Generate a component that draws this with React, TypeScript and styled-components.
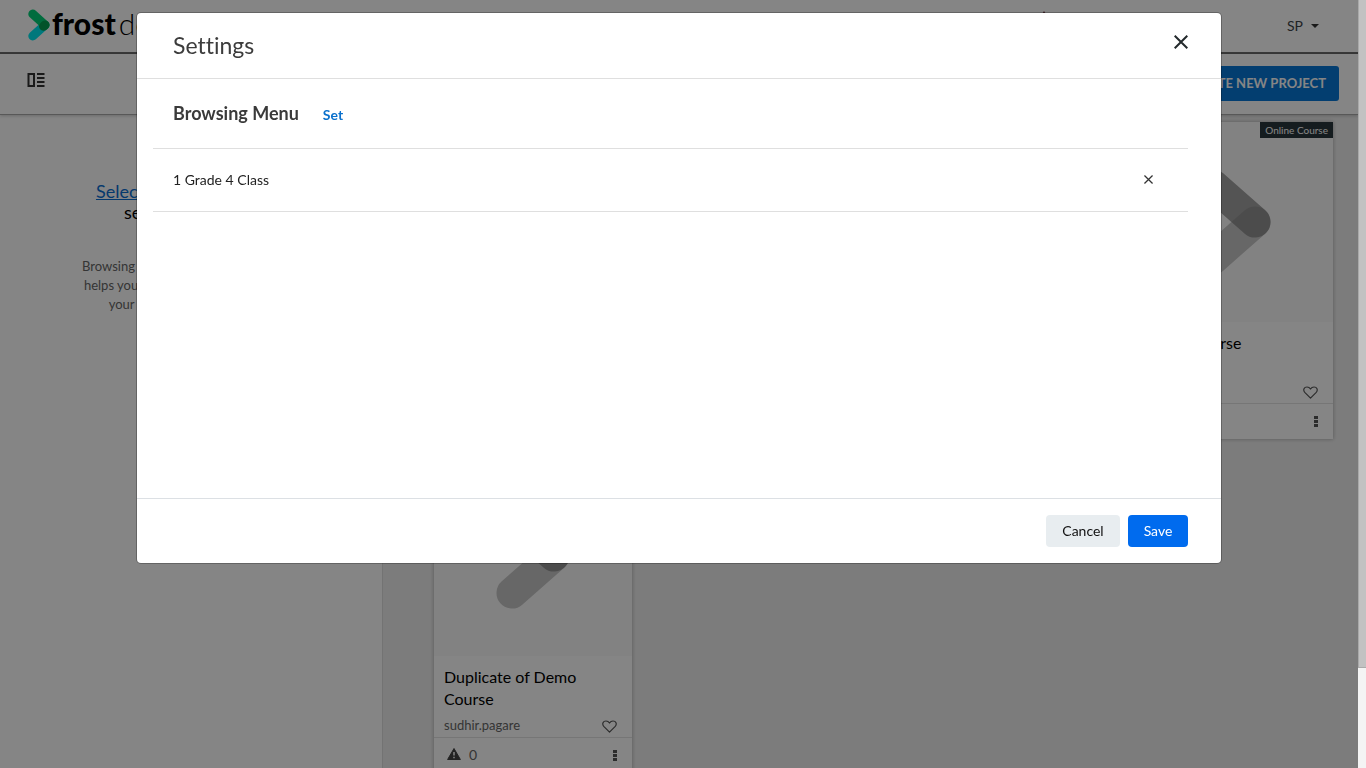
import React from 'react';
import styled, { createGlobalStyle } from 'styled-components';

const GlobalStyle = createGlobalStyle`
  *, *::before, *::after { box-sizing: border-box; }
  body {
    margin: 0;
    font-family: Lato, "Liberation Sans", sans-serif;
    font-size: 14px;
    font-variant-ligatures: none;
    color: #333;
    background: #eee;
  }
  button { font-family: inherit; cursor: pointer; }
`;

const Shell = styled.div`
  display: flex;
  height: 100vh;
  overflow: hidden;
`;

const Page = styled.div`
  flex: 1;
  min-width: 0;
  display: flex;
  flex-direction: column;
`;

const TopBar = styled.header`
  flex: none;
  display: flex;
  align-items: center;
  justify-content: space-between;
  height: 54px;
  padding: 0 35px 2px 28px;
  background: #fff;
  border-bottom: 2px solid #6c6c6c;
`;

const Brand = styled.a`
  display: flex;
  align-items: center;
  gap: 2px;
  height: 48px;
  color: #000;
  text-decoration: none;
  font-size: 30px;
  line-height: 44px;
`;

const BrandText = styled.span`
  display: flex;
  gap: 3px;
  padding-bottom: 4px;
`;

const BrandName = styled.span`
  font-weight: 900;
`;

const BrandSuffix = styled.span`
  font-weight: 300;
`;

const UserArea = styled.div`
  display: flex;
  align-items: center;
  gap: 231px;
`;

const UserButton = styled.button`
  display: flex;
  align-items: center;
  gap: 8px;
  padding: 0 4px;
  border: 0;
  background: none;
  color: #3c4347;
  font-size: 14px;
  svg { margin-top: 2px; }
`;

const Toolbar = styled.div`
  position: relative;
  z-index: 1;
  flex: none;
  display: flex;
  align-items: flex-start;
  justify-content: space-between;
  height: 61px;
  padding: 12px 19px 0 27px;
  background: #fff;
  border-bottom: 1px solid #aaa;
  box-shadow: 0 1px 3px rgba(0, 0, 0, 0.2);
`;

const PanelToggle = styled.button`
  display: flex;
  padding: 7px 0;
  border: 0;
  background: none;
`;

const CreateButton = styled.button`
  height: 35px;
  padding: 0 13px 2px;
  border: 0;
  border-radius: 3px;
  background: #0677d6;
  color: #fff;
  font-size: 13px;
  font-weight: 700;
`;

const Columns = styled.div`
  flex: 1;
  min-height: 0;
  display: flex;
`;

const Sidebar = styled.aside`
  flex: none;
  width: 383px;
  padding-top: 66px;
  background: #fff;
  border-right: 1px solid #ddd;
  text-align: center;
`;

const Prompt = styled.p`
  margin: 0;
  font-size: 18px;
  line-height: 21px;
  color: #000;
  a { color: #0a6ed1; }
`;

const Hint = styled.p`
  margin: 34px 0 0;
  font-size: 13px;
  line-height: 19px;
  color: #666;
`;

const CardGrid = styled.main`
  flex: 1;
  min-width: 0;
  display: grid;
  grid-template-columns: repeat(4, 198px);
  grid-auto-rows: 317px;
  justify-content: space-between;
  row-gap: 17px;
  padding: 7px 25px 0 51px;
  overflow: hidden;
`;

const Card = styled.article`
  position: relative;
  display: flex;
  flex-direction: column;
  background: #fff;
  box-shadow: 0 0 4px rgba(0, 0, 0, 0.3);
`;

const Cover = styled.div`
  display: flex;
  align-items: center;
  justify-content: center;
  height: 200px;
  background: #fafafa;
`;

const Tag = styled.span`
  position: absolute;
  top: 0;
  right: 0;
  height: 16px;
  padding: 0 5px;
  background: #29363c;
  color: #fff;
  font-size: 10px;
  line-height: 16px;
`;

const CardTitle = styled.h3`
  height: 54px;
  margin: 0;
  padding: 10px 10px 0;
  color: #000;
  font-size: 16px;
  font-weight: 400;
  line-height: 22px;
`;

const CardLine = styled.div<{ $foot?: boolean }>`
  display: flex;
  align-items: center;
  justify-content: space-between;
  height: ${(p) => (p.$foot ? '36px' : '27px')};
  padding: ${(p) => (p.$foot ? '0 15px 0 13px' : '5px 15px 0 10px')};
  border-top: ${(p) => (p.$foot ? '1px solid #e2e2e2' : '0')};
  color: #666;
  font-size: ${(p) => (p.$foot ? '14px' : '13px')};
`;

const LineText = styled.span`
  display: flex;
  align-items: center;
  gap: 8px;
  padding-bottom: 3px;
`;

const IconButton = styled.button`
  display: flex;
  padding: 0;
  border: 0;
  background: none;
  color: #333;
`;

const ScrollTrack = styled.div`
  flex: none;
  position: relative;
  z-index: 3;
  width: 8px;
  background: #f4f4f4;
`;

const ScrollThumb = styled.div`
  height: 87%;
  background: #c2c2c2;
  border-left: 1px solid #a9a9a9;
  border-bottom: 1px solid #aaa;
`;

const Backdrop = styled.div`
  position: fixed;
  inset: 0 8px 0 0;
  z-index: 2;
  display: flex;
  align-items: flex-start;
  justify-content: center;
  padding: 13px 16px 0;
  background: rgba(0, 0, 0, 0.48);
`;

const Dialog = styled.section`
  display: flex;
  flex-direction: column;
  width: 100%;
  max-width: 1084px;
  border-radius: 4px;
  background: #fff;
  box-shadow: 0 0 0 1px rgba(0, 0, 0, 0.25);
`;

const DialogHeader = styled.header`
  display: flex;
  align-items: center;
  justify-content: space-between;
  height: 66px;
  padding: 0 33px 0 36px;
  border-bottom: 1px solid #dfdfdf;
  h2 {
    margin: 0;
    padding-bottom: 2px;
    font-size: 23px;
    font-weight: 400;
    line-height: 28px;
    color: #3c3c3c;
  }
`;

const CloseButton = styled(IconButton)`
  padding-bottom: 8px;
  color: #23292c;
`;

const DialogBody = styled.div`
  min-height: 419px;
  padding: 0 33px 0 16px;
`;

const SectionHead = styled.div`
  display: flex;
  align-items: center;
  gap: 24px;
  height: 70px;
  padding: 0 20px 2px;
  border-bottom: 1px solid #dfdfdf;
  h3 {
    margin: 0;
    font-size: 18px;
    font-weight: 700;
    line-height: 22px;
    color: #3a3a3a;
  }
`;

const SetButton = styled.button`
  padding: 3px 0 0;
  border: 0;
  background: none;
  color: #0a70cc;
  font-size: 14px;
  font-weight: 700;
`;

const MenuRow = styled.div`
  display: flex;
  align-items: center;
  justify-content: space-between;
  height: 63px;
  padding: 0 35px 2px 20px;
  border-bottom: 1px solid #dfdfdf;
  color: #222;
`;

const DialogFooter = styled.footer`
  display: flex;
  align-items: center;
  justify-content: flex-end;
  gap: 8px;
  height: 65px;
  padding: 0 33px;
  border-top: 1px solid #dce0e4;
`;

const Action = styled.button<{ $primary?: boolean }>`
  height: 32px;
  width: ${(p) => (p.$primary ? '60px' : '74px')};
  padding: 0 0 2px;
  border: 0;
  border-radius: 4px;
  background: ${(p) => (p.$primary ? '#006bee' : '#e8edf0')};
  color: ${(p) => (p.$primary ? '#fff' : '#111')};
  font-size: 14px;
`;

const LogoMark = () => (
  <svg width="22" height="32" viewBox="0 0 22 32" fill="none" strokeLinecap="round" strokeWidth="9" aria-hidden="true">
    <path d="M4.8 27 L17 16" stroke="#00e6ee" />
    <path d="M4.8 5 L17 16" stroke="#03d077" />
    <path d="M15.5 17.3 L17 16" stroke="#04a052" />
  </svg>
);

const PanelIcon = () => (
  <svg width="18" height="14" viewBox="0 0 18 14" fill="none" stroke="#333" strokeWidth="2" aria-hidden="true">
    <path d="M1.5 1 H7 V13 H1.5 Z M10 1 H17.5 M10 5 H17.5 M10 9 H17.5 M10 13 H17.5" />
  </svg>
);

const CoverMark = () => (
  <svg width="74" height="106" viewBox="0 0 74 106" fill="none" strokeLinecap="round" strokeWidth="31" aria-hidden="true">
    <path d="M16 90 L58 53" stroke="#c6c6c6" />
    <path d="M16 16 L58 53" stroke="rgba(127, 127, 127, 0.73)" />
  </svg>
);

const Heart = () => (
  <svg width="15" height="13" viewBox="0 0 15 13" fill="none" stroke="#555" strokeWidth="1.2" strokeLinejoin="round" aria-hidden="true">
    <path d="M7.5 12.2 L2 6.7 C-.5 3.7 1.2 1 4 1 C5.7 1 6.8 1.900 7.5 3 C8.200 1.900 9.300 1 11 1 C13.800 1 15.500 3.700 13 6.700 Z" />
  </svg>
);

const Dots = () => (
  <svg width="4" height="11" viewBox="0 0 4 11" fill="#555" aria-hidden="true">
    <path d="M0 0h4v3h-4z M0 4h4v3h-4z M0 8h4v3h-4z" />
  </svg>
);

const Warning = () => (
  <svg width="14" height="12" viewBox="0 0 14 12" aria-hidden="true">
    <path d="M7 .5 L13.400 11.500 H.6 Z" fill="#444" stroke="#444" strokeLinejoin="round" />
    <path d="M7 4 V7.500 M7 8.800 V10.300" stroke="#fff" strokeWidth="1.500" />
  </svg>
);

const Cross = ({ size, width }: { size: number; width: number }) => (
  <svg width={size} height={size} viewBox="0 0 14 14" fill="none" stroke="currentColor" strokeWidth={width} aria-hidden="true">
    <path d="M.7 .7 L13.300 13.300 M13.300 .7 L.7 13.300" />
  </svg>
);

const Bell = () => (
  <svg width="16" height="28" viewBox="0 0 16 28" fill="#7c4a52" aria-hidden="true">
    <path d="M8 0 L10 3 C13 4 14 7 14 11 V20 L16 23 H0 L2 20 V11 C2 7 3 4 6 3 Z" />
  </svg>
);

const courses = ['Introduction', 'Sample Course', 'Course Outline', 'Demo Course', 'Duplicate of Demo Course'];

export default function App() {
  return (
    <>
      <GlobalStyle />
      <Shell>
        <Page>
          <TopBar>
            <Brand href="#">
              <LogoMark />
              <BrandText>
                <BrandName>frost</BrandName>
                <BrandSuffix>demo</BrandSuffix>
              </BrandText>
            </Brand>
            <UserArea>
              <Bell />
              <UserButton>
                SP
                <svg width="8" height="4" viewBox="0 0 8 4" fill="#333" aria-hidden="true">
                  <path d="M0 0h8L4 4z" />
                </svg>
              </UserButton>
            </UserArea>
          </TopBar>
          <Toolbar>
            <PanelToggle aria-label="Toggle panel">
              <PanelIcon />
            </PanelToggle>
            <CreateButton>CREATE NEW PROJECT</CreateButton>
          </Toolbar>
          <Columns>
            <Sidebar>
              <Prompt>
                <a href="#">Select a Browsing Menu</a>
                <br />
                set from Settings
              </Prompt>
              <Hint>
                Browsing Menu is a simple option that
                <br />
                helps you to organize and quickly find
                <br />
                your projects and all courses.
              </Hint>
            </Sidebar>
            <CardGrid>
              {courses.map((title) => (
                <Card key={title}>
                  <Cover>
                    <CoverMark />
                  </Cover>
                  <Tag>Online Course</Tag>
                  <CardTitle>{title}</CardTitle>
                  <CardLine>
                    <LineText>sudhir.pagare</LineText>
                    <IconButton aria-label="Favourite">
                      <Heart />
                    </IconButton>
                  </CardLine>
                  <CardLine $foot>
                    <LineText>
                      <Warning />0
                    </LineText>
                    <IconButton aria-label="More">
                      <Dots />
                    </IconButton>
                  </CardLine>
                </Card>
              ))}
            </CardGrid>
          </Columns>
        </Page>
        <ScrollTrack>
          <ScrollThumb />
        </ScrollTrack>
      </Shell>
      <Backdrop>
        <Dialog role="dialog" aria-modal="true" aria-labelledby="settings-title">
          <DialogHeader>
            <h2 id="settings-title">Settings</h2>
            <CloseButton aria-label="Close">
              <Cross size={14} width={2} />
            </CloseButton>
          </DialogHeader>
          <DialogBody>
            <SectionHead>
              <h3>Browsing Menu</h3>
              <SetButton>Set</SetButton>
            </SectionHead>
            <MenuRow>
              1 Grade 4 Class
              <IconButton aria-label="Remove 1 Grade 4 Class">
                <Cross size={9} width={2} />
              </IconButton>
            </MenuRow>
          </DialogBody>
          <DialogFooter>
            <Action>Cancel</Action>
            <Action $primary>Save</Action>
          </DialogFooter>
        </Dialog>
      </Backdrop>
    </>
  );
}
